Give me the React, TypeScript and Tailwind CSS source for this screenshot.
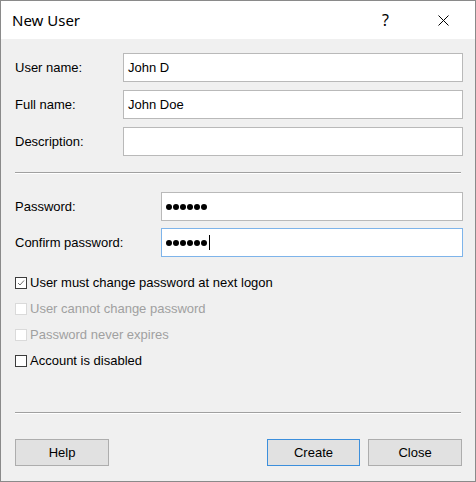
import React from "react";

const font = { fontFamily: '"Liberation Sans", Arial, sans-serif' };

function TextBox({ value, focused, password, caret }: { value?: string; focused?: boolean; password?: boolean; caret?: boolean }) {
  return (
    <div
      className={`flex-1 h-[29px] bg-white border flex items-center pl-[4px] text-[13px] text-black ${
        focused ? "border-[#7eb4ea]" : "border-[#b9b9b9]"
      }`}
    >
      {password ? (
        <span className="flex items-center gap-[1px]">
          {Array.from({ length: 6 }).map((_, i) => (
            <span key={i} className="w-[6px] h-[6px] rounded-full bg-black" />
          ))}
          {caret && <span className="ml-[1px] w-[1px] h-[15px] bg-black" />}
        </span>
      ) : (
        <span>{value}</span>
      )}
    </div>
  );
}

function Row({ label, labelW, children }: { label: string; labelW: string; children: React.ReactNode }) {
  return (
    <div className="flex items-center">
      <div className={`${labelW} text-[13px] text-black`}>{label}</div>
      {children}
    </div>
  );
}

function Check({ label, checked, disabled }: { label: string; checked?: boolean; disabled?: boolean }) {
  return (
    <div className="flex items-center h-[26px]">
      <div
        className={`w-[12px] h-[12px] border bg-white flex items-center justify-center ${
          disabled ? "border-[#dadada]" : "border-[#3c3c3c]"
        }`}
      >
        {checked && (
          <svg width="8" height="8" viewBox="0 0 8 8">
            <path d="M1 4 L3 6 L7 1.5" fill="none" stroke="#707070" strokeWidth="1" />
          </svg>
        )}
      </div>
      <span className={`ml-[3px] text-[13px] ${disabled ? "text-[#a0a0a0]" : "text-black"}`}>{label}</span>
    </div>
  );
}

function Button({ label, primary, className = "" }: { label: string; primary?: boolean; className?: string }) {
  return (
    <div
      className={`h-[27px] bg-[#e1e1e1] border flex items-center justify-center text-[13px] text-black ${
        primary ? "border-[#3c8fdc]" : "border-[#adadad]"
      } ${className}`}
    >
      {label}
    </div>
  );
}

export default function App() {
  return (
    <div style={font} className="w-[476px] h-[482px] border border-[#8a8a8a] bg-[#f0f0f0] flex flex-col overflow-hidden">
      <div className="h-[38px] bg-white flex items-center shrink-0">
        <span className="ml-[11px] text-[15px] text-black" style={{ fontFamily: '"Noto Sans", "Open Sans", sans-serif' }}>
          New User
        </span>
        <span className="ml-auto mr-[49px] text-[16px] text-black" style={{ fontFamily: '"Noto Sans", sans-serif' }}>?</span>
        <svg className="mr-[26px]" width="11" height="11" viewBox="0 0 11 11">
          <path d="M0.5 0.5 L10.5 10.5 M10.5 0.5 L0.5 10.5" stroke="#000" strokeWidth="1" />
        </svg>
      </div>
      <div className="flex flex-col pl-[14px] pr-[12px] pt-[14px]">
        <div className="flex flex-col gap-[8px]">
          <Row label="User name:" labelW="w-[108px]"><TextBox value="John D" /></Row>
          <Row label="Full name:" labelW="w-[108px]"><TextBox value="John Doe" /></Row>
          <Row label="Description:" labelW="w-[108px]"><TextBox value="" /></Row>
        </div>
        <div className="mt-[16px] mr-[2px] h-[2px] border-t border-[#a0a0a0] border-b border-b-white" />
        <div className="mt-[18px] flex flex-col gap-[7px]">
          <Row label="Password:" labelW="w-[146px]"><TextBox password /></Row>
          <Row label="Confirm password:" labelW="w-[146px]"><TextBox password focused caret /></Row>
        </div>
        <div className="mt-[13px] flex flex-col">
          <Check label="User must change password at next logon" checked />
          <Check label="User cannot change password" disabled />
          <Check label="Password never expires" disabled />
          <Check label="Account is disabled" />
        </div>
        <div className="mt-[38px] mr-[2px] h-[2px] border-t border-[#a0a0a0] border-b border-b-white" />
        <div className="mt-[25px] flex items-center">
          <Button label="Help" className="w-[94px]" />
          <Button label="Create" primary className="ml-auto w-[93px]" />
          <Button label="Close" className="ml-[8px] w-[94px] mr-[1px]" />
        </div>
      </div>
    </div>
  );
}
